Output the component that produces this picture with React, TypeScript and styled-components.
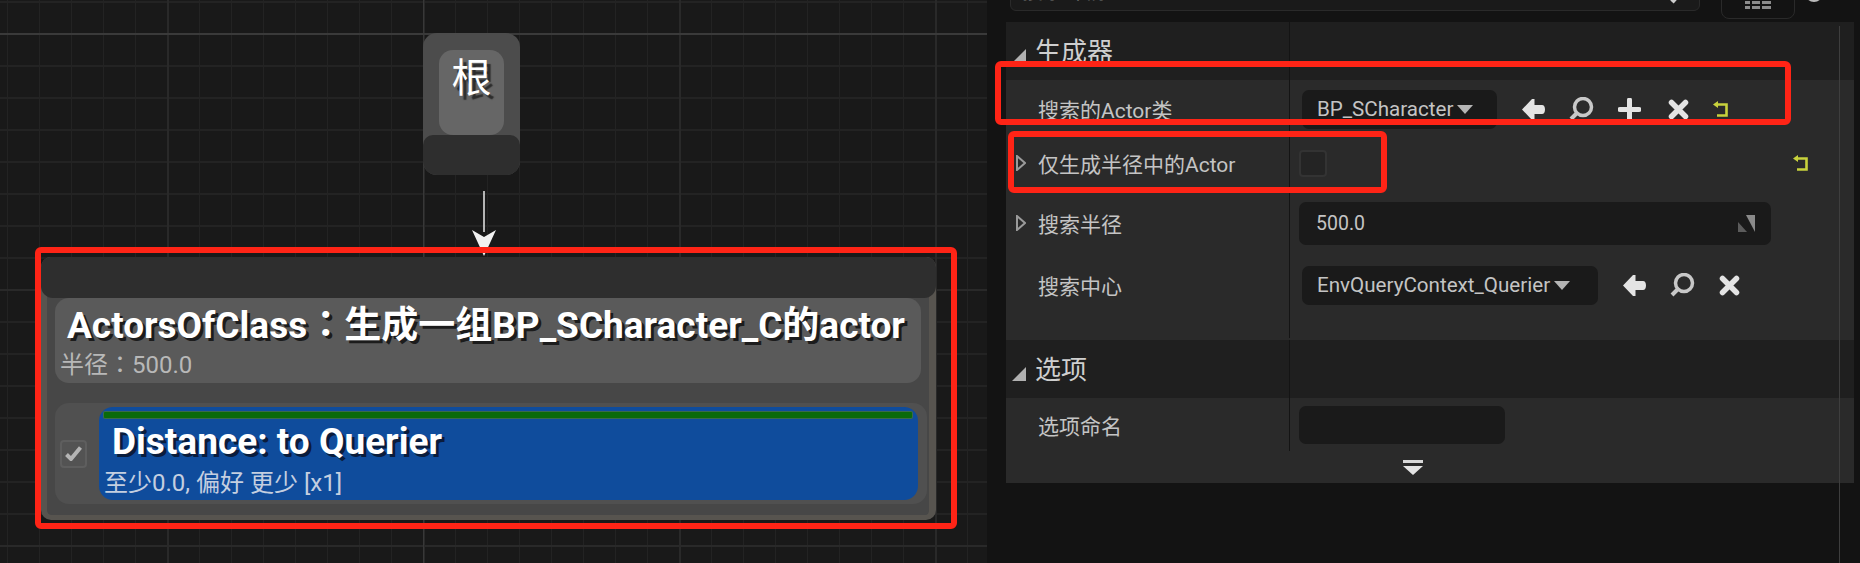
import styled, { createGlobalStyle } from 'styled-components';

const FONT = 'Roboto, "Noto Sans CJK SC", sans-serif';

const GlobalStyle = createGlobalStyle`
  html, body {
    margin: 0;
    background: #151515;
    overflow: hidden;
  }
`;

const Page = styled.div`
  position: relative;
  display: flex;
  width: 1860px;
  height: 563px;
  overflow: hidden;
  font-family: ${FONT};
`;

/* graph side */
const GraphPane = styled.div`
  position: relative;
  flex: 0 0 987px;
  background-color: #191919;
  background-image:
    linear-gradient(#3a3a3a, #3a3a3a),
    linear-gradient(#383838, #383838),
    linear-gradient(90deg, #292929 2px, transparent 2px),
    linear-gradient(#292929 2px, transparent 2px),
    linear-gradient(90deg, #232323 1px, transparent 1px),
    linear-gradient(#232323 2px, transparent 2px);
  background-size: 100% 2px, 1px 100%, 256px 256px, 256px 256px, 32px 32px, 32px 32px;
  background-position: 0 33px, 423px 0, 167px 0, 0 33px, 7px 0, 0 1px;
  background-repeat: no-repeat, no-repeat, repeat, repeat, repeat, repeat;
`;

const RootNode = styled.div`
  position: absolute;
  left: 423px;
  top: 33px;
  width: 97px;
  height: 142px;
  display: flex;
  flex-direction: column;
  align-items: center;
  padding-top: 17px;
  box-sizing: border-box;
  background: #4c4c4c;
  border-radius: 14px;
  overflow: hidden;
`;

const RootLabel = styled.div`
  width: 65px;
  height: 85px;
  background: #666;
  border-radius: 14px 14px 14px 14px;
  color: #fff;
  font-size: 40px;
  line-height: 58px;
  text-align: center;
  text-shadow: 4px 4px 1px #2c2c2c;
`;

const RootFoot = styled.div`
  align-self: stretch;
  flex: 1;
  background: #2e2e2e;
  border-radius: 10px 10px 0 0;
`;

const Wire = styled.svg`
  position: absolute;
  left: 470px;
  top: 190px;
`;

const ActorNode = styled.div`
  position: absolute;
  left: 41px;
  top: 257px;
  width: 895px;
  height: 263px;
  box-sizing: border-box;
  background: #474747;
  border: solid #57544f;
  border-width: 0 7px 5px 6px;
  border-radius: 10px;
  padding: 0 2px 0 8px;
`;

const NodeHeader = styled.div`
  height: 41px;
  margin: 0 -9px 0 -14px;
  background: #2e2e2e;
  border-radius: 10px 10px 12px 12px;
`;

const ActorPanel = styled.div`
  height: 85px;
  margin-right: 6px;
  box-sizing: border-box;
  background: #5a5a5a;
  border-radius: 14px;
  padding: 5px 0 0 12px;
`;

const BigTitle = styled.div`
  color: #fff;
  font-size: 37px;
  font-weight: 700;
  line-height: 46px;
  white-space: nowrap;
  text-shadow: 3px 3px 0 #1c1c1c;
`;

const Colon = styled.span`
  font-family: Roboto, "Noto Sans CJK TC", sans-serif;
`;

const SubText = styled.div<{ $color: string }>`
  color: ${(p) => p.$color};
  font-size: 24px;
  line-height: 28px;
  white-space: nowrap;
`;

const ActorSub = styled(SubText)`
  margin: 2px 0 0 -7px;
`;

const TestRow = styled.div`
  display: flex;
  align-items: center;
  height: 101px;
  margin-top: 20px;
  padding-right: 9px;
  background: #505050;
  border-radius: 14px;
`;

const CheckSlot = styled.div`
  flex: 0 0 44px;
  display: flex;
  justify-content: center;
  padding-right: 7px;
  box-sizing: border-box;
`;

const CheckBox = styled.div`
  width: 27px;
  height: 28px;
  box-sizing: border-box;
  background: #535353;
  border: 2px solid #5e5e5e;
  border-radius: 4px;
  display: flex;
  align-items: center;
  justify-content: center;
`;

const TestCard = styled.div`
  flex: 1;
  height: 93px;
  box-sizing: border-box;
  background: #0f4c9c;
  border-radius: 14px;
  padding: 5px 6px 0 5px;
`;

const GreenBar = styled.div`
  height: 6px;
  background: #0a6a0a;
  box-shadow: 0 0 0 1px #3a6a4a;
  border-radius: 1px;
`;

const TestTitle = styled(BigTitle)`
  font-size: 37px;
  line-height: 44px;
  margin: 2px 0 0 8px;
  text-shadow: 3px 3px 0 #0a1c3c;
`;

const TestSub = styled(SubText)`
  margin-top: 5px;
`;

/* details side */
const DetailsPane = styled.div`
  position: relative;
  flex: 1;
  min-width: 0;
  padding: 0 6px 0 19px;
  background: #131313;
  overflow: hidden;
  &::after {
    content: '';
    position: absolute;
    left: 852px;
    top: 26px;
    bottom: 0;
    width: 1px;
    background: #3e3e3e;
  }
`;

const Toolbar = styled.div`
  display: flex;
  align-items: flex-start;
  height: 51px;
  margin-top: -29px;
`;

const SearchBox = styled.div`
  display: flex;
  align-items: center;
  justify-content: space-between;
  width: 690px;
  height: 40px;
  box-sizing: border-box;
  margin-left: 4px;
  padding: 0 2px 0 11px;
  background: #1a1a1a;
  border: 1px solid #2a2a2a;
  border-radius: 6px;
  color: #777;
  font-size: 21px;
  line-height: 48px;
`;

const ViewButton = styled.div`
  display: flex;
  align-items: flex-end;
  justify-content: center;
  width: 74px;
  height: 48px;
  box-sizing: border-box;
  margin-left: 21px;
  padding-bottom: 9px;
  border: 1px solid #2a2a2a;
  border-radius: 8px;
`;

const SettingsDot = styled.div`
  width: 18px;
  height: 18px;
  margin: 13px 0 0 10px;
  border-radius: 50%;
  background: #bbb;
`;

const SectionHead = styled.div`
  display: flex;
  height: 58px;
  background: #1f1f1f;
`;

const LabelCell = styled.div`
  flex: 0 0 284px;
  display: flex;
  align-items: center;
  box-sizing: border-box;
  height: 100%;
  padding-left: 32px;
  border-right: 1px solid #141414;
  color: #c4c4c4;
  font-size: 21px;
  white-space: nowrap;
`;

const SectionLabel = styled(LabelCell)`
  padding: 0 0 4px 6px;
  gap: 9px;
  color: #cfcfcf;
  font-size: 26px;
`;

const Body = styled.div`
  background: #2a2a2a;
`;

const Row = styled.div<{ $h: number }>`
  display: flex;
  align-items: center;
  height: ${(p) => p.$h}px;
`;

const ExpandMark = styled.svg`
  flex: 0 0 10px;
  margin: 0 12px 0 -22px;
`;

const ValueCell = styled.div`
  flex: 1;
  display: flex;
  align-items: center;
  padding-left: 9px;
  min-width: 0;
`;

const Combo = styled.div<{ $w: number }>`
  display: flex;
  align-items: center;
  gap: 4px;
  width: ${(p) => p.$w}px;
  height: 39px;
  box-sizing: border-box;
  margin-left: 3px;
  padding-left: 15px;
  background: #1a1a1a;
  border-radius: 7px;
  color: #c4c4c4;
  font-size: 20.6px;
  white-space: nowrap;
`;

const Caret = styled.span`
  width: 0;
  height: 0;
  border-left: 8px solid transparent;
  border-right: 8px solid transparent;
  border-top: 9px solid #b5b5b5;
`;

const IconRow = styled.div`
  display: flex;
  align-items: center;
  margin-left: 25px;
`;

const ToolIcon = styled.svg<{ $gap?: number }>`
  display: block;
  flex: none;
  margin-right: ${(p) => p.$gap ?? 24}px;
`;

const EmptyCheck = styled.div`
  width: 28px;
  height: 27px;
  box-sizing: border-box;
  background: #242424;
  border: 2px solid #333;
  border-radius: 4px;
`;

const NumberField = styled.div`
  display: flex;
  align-items: center;
  justify-content: space-between;
  width: 472px;
  height: 43px;
  box-sizing: border-box;
  padding: 0 16px 0 17px;
  background: #1a1a1a;
  border-radius: 7px;
  color: #c4c4c4;
  font-size: 19.5px;
`;

const TextField = styled.div`
  width: 206px;
  height: 38px;
  background: #1a1a1a;
  border-radius: 7px;
`;

const RowReset = styled.div`
  margin-left: auto;
  margin-right: 45px;
`;

const FillRow = styled.div<{ $h: number }>`
  display: flex;
  height: ${(p) => p.$h}px;
`;

const FillLabel = styled.div`
  flex: 0 0 284px;
  box-sizing: border-box;
  height: calc(100% - 2px);
  border-right: 1px solid #141414;
`;

const Footer = styled.div`
  display: flex;
  justify-content: center;
  height: 32px;
  padding: 9px 35px 0 0;
  box-sizing: border-box;
`;

/* red marks drawn over the shot */
const Mark = styled.div<{ $x: number; $y: number; $w: number; $h: number }>`
  position: absolute;
  left: ${(p) => p.$x}px;
  top: ${(p) => p.$y}px;
  width: ${(p) => p.$w}px;
  height: ${(p) => p.$h}px;
  box-sizing: border-box;
  border: 6px solid #ff2416;
  border-radius: 6px;
`;

const SectionArrow = () => (
  <svg width="14" height="14" viewBox="0 0 14 14" style={{ flex: 'none', marginTop: 13 }}>
    <path d="M14 0V14H0Z" fill="#b0b0b0" />
  </svg>
);

const Expand = () => (
  <ExpandMark width="10" height="16" viewBox="0 0 10 16">
    <path d="M1 1L9 8L1 15Z" fill="none" stroke="#9a9a9a" strokeWidth="2" />
  </ExpandMark>
);

const ArrowIcon = ({ gap }: { gap?: number }) => (
  <ToolIcon $gap={gap} width="23" height="21" viewBox="0 0 23 21">
    <path d="M0 10.5L10 0H12.5V6H20C22 6 23 8 23 10.5S22 15 20 15H12.5V21H10Z" fill="#e4e4e4" />
  </ToolIcon>
);

const SearchIcon = ({ gap }: { gap?: number }) => (
  <ToolIcon $gap={gap} width="25" height="24" viewBox="0 0 25 24">
    <circle cx="14" cy="10" r="8.5" fill="none" stroke="#c8c8c8" strokeWidth="3.5" />
    <path d="M8 16L2 22" stroke="#c8c8c8" strokeWidth="4" />
  </ToolIcon>
);

const PlusIcon = ({ gap }: { gap?: number }) => (
  <ToolIcon $gap={gap} width="23" height="23" viewBox="0 0 23 23">
    <path d="M11.5 2V21M2 11.5H21" stroke="#e4e4e4" strokeWidth="5" strokeLinecap="round" />
  </ToolIcon>
);

const CrossIcon = ({ gap }: { gap?: number }) => (
  <ToolIcon $gap={gap} width="21" height="21" viewBox="0 0 21 21">
    <path d="M3.5 3.5L17.5 17.5M17.5 3.5L3.5 17.5" stroke="#e4e4e4" strokeWidth="5.5" strokeLinecap="round" />
  </ToolIcon>
);

const ResetIcon = ({ gap }: { gap?: number }) => (
  <ToolIcon $gap={gap ?? 0} width="16" height="17" viewBox="0 0 16 17">
    <path d="M0 3.5L5 0V7Z" fill="#c8d23c" />
    <path d="M4 3.5H13.5V14.5H4" fill="none" stroke="#c8d23c" strokeWidth="2.6" />
  </ToolIcon>
);

const App = () => {
  return (
    <Page>
      <GlobalStyle />
      <GraphPane>
        <RootNode>
          <RootLabel>根</RootLabel>
          <RootFoot />
        </RootNode>
        <Wire width="28" height="70" viewBox="0 0 28 70">
          <path d="M14 1V42" stroke="#e8e8e8" strokeWidth="1.5" />
          <path d="M2 40L14 47L26 40L14 66Z" fill="#f2f2f2" />
        </Wire>
        <ActorNode>
          <NodeHeader />
          <ActorPanel>
            <BigTitle>
              ActorsOfClass<Colon>：</Colon>生成一组BP_SCharacter_C的actor
            </BigTitle>
            <ActorSub $color="#b8b8b8">
              半径<Colon>：</Colon>500.0
            </ActorSub>
          </ActorPanel>
          <TestRow>
            <CheckSlot>
              <CheckBox>
                <svg width="17" height="15" viewBox="0 0 17 15">
                  <path d="M1.5 8.5L6 13L15.5 1.5" fill="none" stroke="#b4b4b4" strokeWidth="4" />
                </svg>
              </CheckBox>
            </CheckSlot>
            <TestCard>
              <GreenBar />
              <TestTitle>Distance: to Querier</TestTitle>
              <TestSub $color="#c4cfe0">至少0.0, 偏好 更少 [x1]</TestSub>
            </TestCard>
          </TestRow>
        </ActorNode>
      </GraphPane>

      <DetailsPane>
        <Toolbar>
          <SearchBox>
            搜索详情
            <svg width="28" height="28" viewBox="0 0 28 28">
              <circle cx="16" cy="11" r="8" fill="none" stroke="#bbb" strokeWidth="3.5" />
              <path d="M10 17L3 25" stroke="#ccc" strokeWidth="4.5" />
            </svg>
          </SearchBox>
          <ViewButton>
            <svg width="26" height="8" viewBox="0 0 26 8">
              <path d="M0 1.5H26M0 6.5H26" stroke="#8c8c8c" strokeWidth="3" strokeDasharray="5 2 8 2 9 0" />
            </svg>
          </ViewButton>
          <SettingsDot />
        </Toolbar>

        <SectionHead>
          <SectionLabel>
            <SectionArrow />
            生成器
          </SectionLabel>
        </SectionHead>
        <Body>
          <Row $h={58}>
            <LabelCell>搜索的Actor类</LabelCell>
            <ValueCell>
              <Combo $w={195}>
                BP_SCharacter
                <Caret />
              </Combo>
              <IconRow>
                <ArrowIcon />
                <SearchIcon />
                <PlusIcon gap={27} />
                <CrossIcon />
                <ResetIcon />
              </IconRow>
            </ValueCell>
          </Row>
          <Row $h={50}>
            <LabelCell>
              <Expand />
              仅生成半径中的Actor
            </LabelCell>
            <ValueCell>
              <EmptyCheck />
              <RowReset>
                <ResetIcon />
              </RowReset>
            </ValueCell>
          </Row>
          <Row $h={70}>
            <LabelCell>
              <Expand />
              搜索半径
            </LabelCell>
            <ValueCell>
              <NumberField>
                500.0
                <svg width="17" height="17" viewBox="0 0 17 17">
                  <path d="M8 0H17V17Z" fill="#8a8a8a" />
                  <path d="M0 7L9 17H0Z" fill="#5c5c5c" />
                </svg>
              </NumberField>
            </ValueCell>
          </Row>
          <Row $h={54}>
            <LabelCell>搜索中心</LabelCell>
            <ValueCell>
              <Combo $w={296}>
                EnvQueryContext_Querier
                <Caret />
              </Combo>
              <IconRow>
                <ArrowIcon />
                <SearchIcon />
                <CrossIcon gap={0} />
              </IconRow>
            </ValueCell>
          </Row>
          <FillRow $h={28}>
            <FillLabel />
          </FillRow>
        </Body>

        <SectionHead>
          <SectionLabel>
            <SectionArrow />
            选项
          </SectionLabel>
        </SectionHead>
        <Body>
          <Row $h={53}>
            <LabelCell>选项命名</LabelCell>
            <ValueCell>
              <TextField />
            </ValueCell>
          </Row>
          <Footer>
            <svg width="20" height="15" viewBox="0 0 20 15">
              <rect width="20" height="3" fill="#d8d8d8" />
              <path d="M0 6H20L10 15Z" fill="#e4e4e4" />
            </svg>
          </Footer>
        </Body>
      </DetailsPane>

      <Mark $x={35} $y={247} $w={922} $h={282} />
      <Mark $x={995} $y={61} $w={796} $h={64} />
      <Mark $x={1008} $y={131} $w={379} $h={62} />
    </Page>
  );
};

export default App;
